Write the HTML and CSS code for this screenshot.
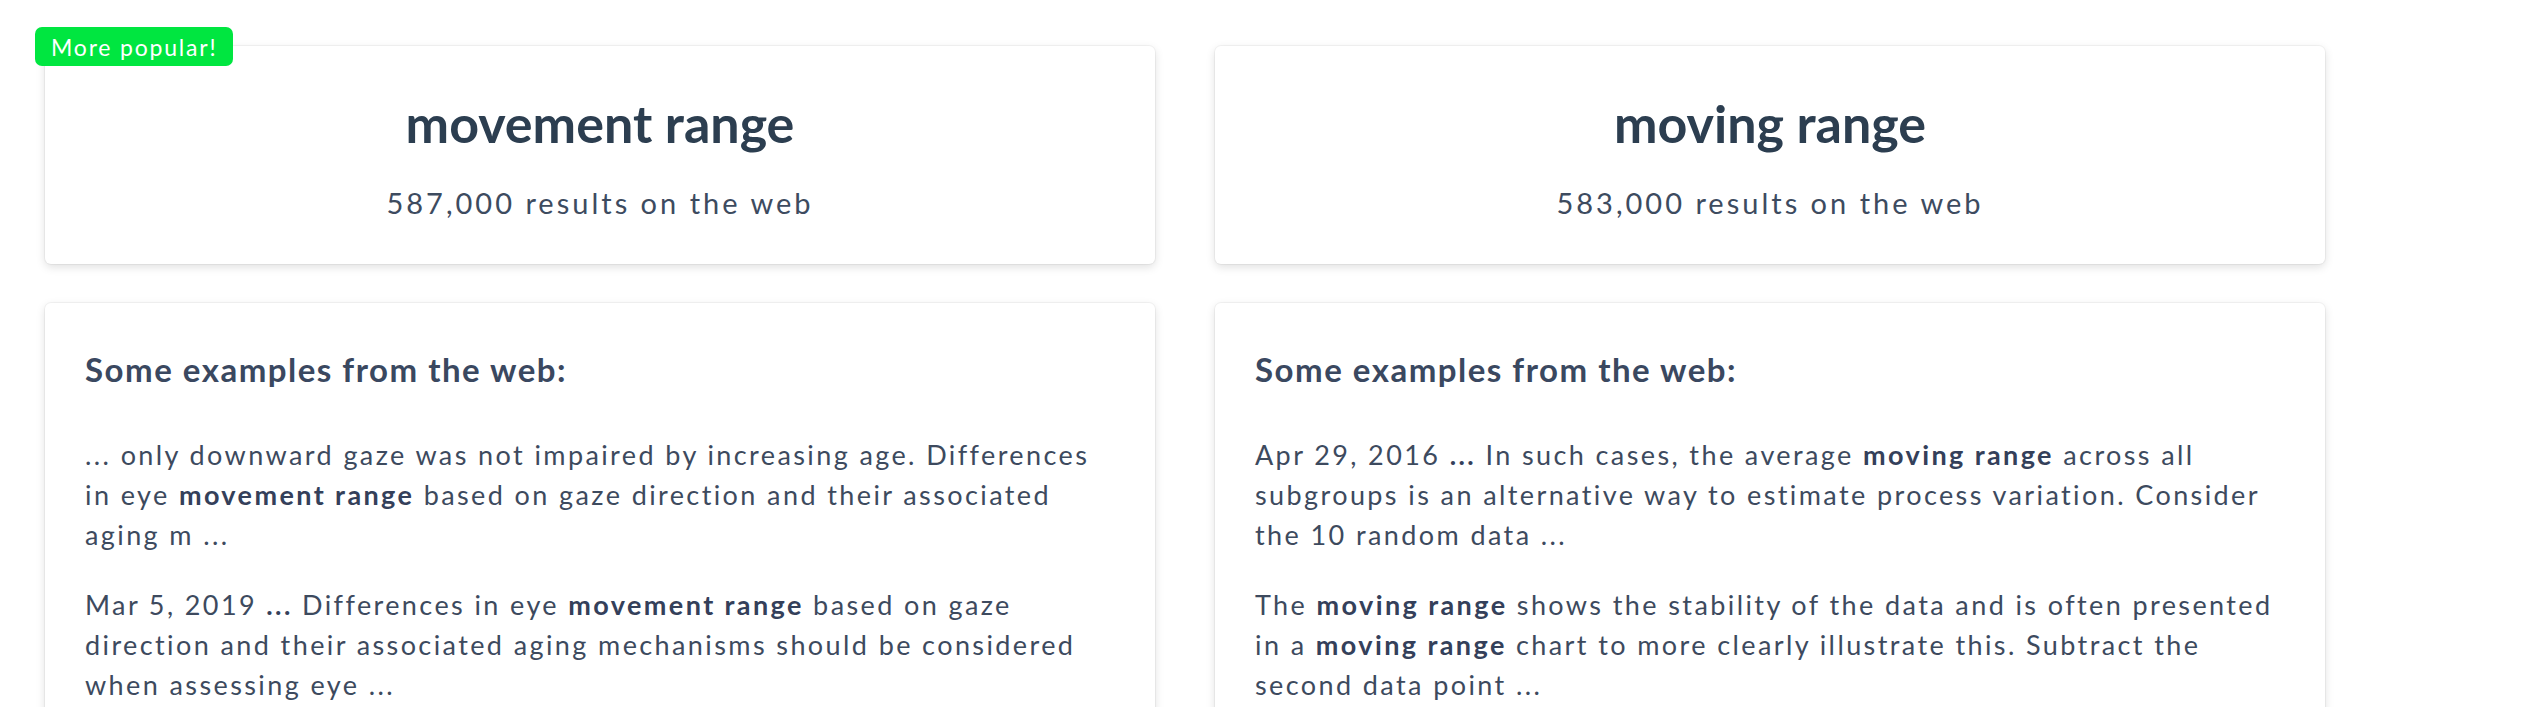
FILE: index.html
```html
<!DOCTYPE html>
<html lang="en">
<head>
<meta charset="utf-8">
<title>movement range vs moving range</title>
<link rel="stylesheet" href="styles.css">
</head>
<body>
<main class="compare">
  <section class="card summary">
    <span class="badge">More popular!</span>
    <h2 class="term">movement range</h2>
    <p class="count">587,000 results on the web</p>
  </section>
  <section class="card summary">
    <h2 class="term">moving range</h2>
    <p class="count">583,000 results on the web</p>
  </section>
  <section class="card examples">
    <h3 class="examples-title">Some examples from the web:</h3>
    <p>... only downward gaze was not impaired by increasing age. Differences in eye <b>movement range</b> based on gaze direction and their associated aging m ...</p>
    <p>Mar 5, 2019 <b>...</b> Differences in eye <b>movement range</b> based on gaze direction and their associated aging mechanisms should be considered when assessing eye ...</p>
    <p>Eye <b>movement range</b> was measured in all directions of gaze using a perimeter ...</p>
  </section>
  <section class="card examples">
    <h3 class="examples-title">Some examples from the web:</h3>
    <p>Apr 29, 2016 <b>...</b> In such cases, the average <b>moving range</b> across all subgroups is an alternative way to estimate process variation. Consider the 10 random data ...</p>
    <p>The <b>moving range</b> shows the stability of the data and is often presented in a <b>moving range</b> chart to more clearly illustrate this. Subtract the second data point ...</p>
    <p>The average <b>moving range</b> is used to calculate the control limits ...</p>
  </section>
</main>
</body>
</html>
```
FILE: styles.css
```css
html, body {
  margin: 0;
  padding: 0;
  background: #ffffff;
}

body {
  font-family: "Lato", "Liberation Sans", sans-serif;
  color: #34495e;
}

.compare {
  display: grid;
  grid-template-columns: 1110px 1110px;
  column-gap: 60px;
  row-gap: 39px;
  padding: 46px 0 0 45px;
  align-items: start;
}

.card {
  position: relative;
  background: #fff;
  border-radius: 6px;
  box-shadow: 0 0 0 1px rgba(0, 0, 0, 0.04), 0 3px 10px rgba(0, 0, 0, 0.13);
}

.summary {
  text-align: center;
  padding: 47px 20px 41px;
}

.badge {
  position: absolute;
  left: -10px;
  top: -19px;
  height: 39px;
  padding: 0 16px;
  display: flex;
  align-items: center;
  background: #00e640;
  color: #fff;
  border-radius: 7px;
  font-size: 23px;
  letter-spacing: 1.8px;
}

.term {
  margin: 0;
  font-size: 52px;
  line-height: 60px;
  font-weight: 700;
  color: #2c3e50;
}

.count {
  margin: 30px 0 0;
  font-size: 29px;
  line-height: 40px;
  letter-spacing: 3px;
  color: #3d4b5f;
}

.examples {
  padding: 46px 40px 40px;
  min-height: 500px;
}

.examples-title {
  margin: 0 0 46px;
  font-size: 33px;
  line-height: 40px;
  font-weight: 700;
  letter-spacing: 1.5px;
  color: #3a4860;
}

.examples p {
  margin: 0 0 30px;
  font-size: 27px;
  line-height: 40px;
  letter-spacing: 2.4px;
  color: #3d4a5e;
}

.examples b {
  font-weight: 700;
  color: #34405a;
}
```
